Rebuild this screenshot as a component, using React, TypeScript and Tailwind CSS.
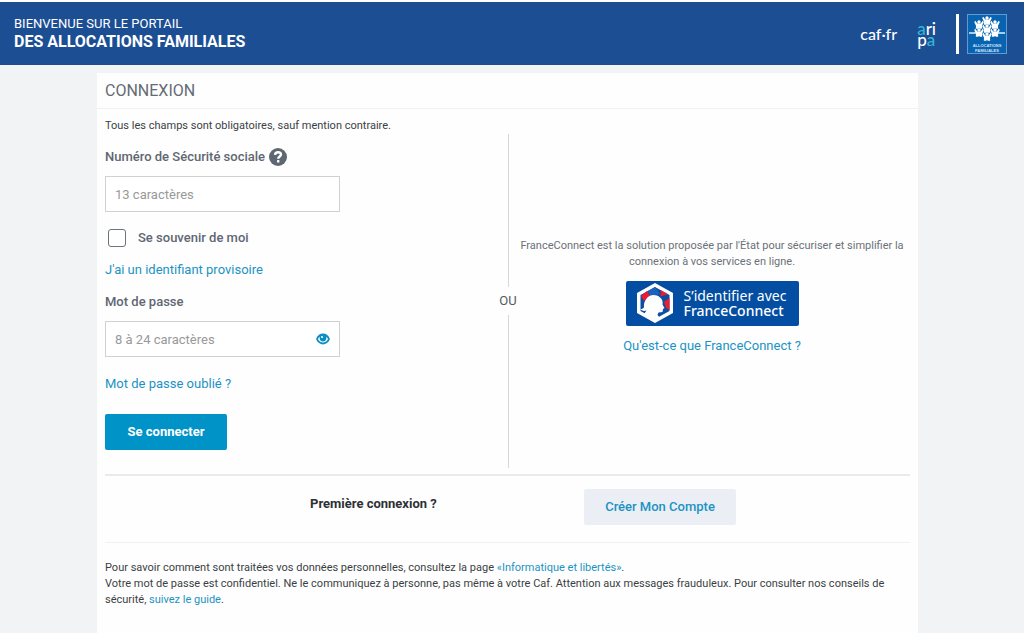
import { useState } from 'react'

const LINK = 'text-[#1b93c3] hover:underline'
const FIELD =
  'block h-9 w-full border border-[#cfd2d4] bg-white pl-[9px] text-[13px] text-[#333] placeholder:text-[#999] focus:outline-none focus:border-[#0093c8]'
const LABEL = 'text-[13px] leading-4 font-medium text-[#5f6772]'

const App = () => {
  const [showPassword, setShowPassword] = useState(false)

  return (
    <div className="min-h-screen bg-[#f1f3f5] font-['Roboto','Liberation_Sans',sans-serif] text-[#3b3f44]">
      <Header />

      <main className="pl-[97px] pr-[106px] pt-2">
        <div className="min-h-[560px] bg-[#fefefe] pb-7">
          <h1 className="flex h-9 items-center border-b border-[#eff1f3] px-2 text-[16px] text-[#646b74]">CONNEXION</h1>

          <div className="px-2">
            <div className="flex pt-[9px]">
              {/* Login form */}
              <form className="w-[393px] shrink-0" onSubmit={(e) => e.preventDefault()}>
                <p className="text-[11px] leading-4">Tous les champs sont obligatoires, sauf mention contraire.</p>

                <div className="mt-[11px] flex h-6 items-center gap-1">
                  <label htmlFor="nir" className={LABEL}>Numéro de Sécurité sociale</label>
                  <button type="button" aria-label="Aide" className="cursor-pointer">
                    <HelpIcon />
                  </button>
                </div>
                <div className="mt-[7px] w-[235px]">
                  <input id="nir" type="text" placeholder="13 caractères" className={FIELD} />
                </div>

                <label className={`mt-[17px] flex items-center gap-3 pl-[3px] ${LABEL}`}>
                  <input
                    type="checkbox"
                    className="size-[18px] appearance-none rounded-[3px] border border-[#6c737b] bg-white checked:bg-[#0093c8]"
                  />
                  Se souvenir de moi
                </label>

                <p className="mt-[15px] text-[13px] leading-4">
                  <a href="#identifiant" className={LINK}>J'ai un identifiant provisoire</a>
                </p>

                <label htmlFor="password" className={`mt-4 block ${LABEL}`}>Mot de passe</label>
                <div className="relative mt-[11px] w-[235px]">
                  <input
                    id="password"
                    type={showPassword ? 'text' : 'password'}
                    placeholder="8 à 24 caractères"
                    className={FIELD}
                  />
                  <button
                    type="button"
                    aria-label="Afficher le mot de passe"
                    onClick={() => setShowPassword(!showPassword)}
                    className="absolute inset-y-0 right-[10px] flex cursor-pointer items-center"
                  >
                    <EyeIcon />
                  </button>
                </div>

                <p className="mt-[19px] text-[13px] leading-4">
                  <a href="#oubli" className={LINK}>Mot de passe oublié ?</a>
                </p>

                <button
                  type="submit"
                  className="mt-[22px] h-9 w-[122px] cursor-pointer rounded-[2px] bg-[#0093c8] text-[13px] font-bold text-white"
                >
                  Se connecter
                </button>
              </form>

              {/* Separator */}
              <div className="mt-4 flex h-[334px] w-5 shrink-0 flex-col items-center">
                <div className="w-px flex-1 bg-[#d5d7d9]" />
                <span className="py-1.5 text-[13px] leading-4 text-[#555b62]">OU</span>
                <div className="w-px flex-1 bg-[#d5d7d9]" />
              </div>

              {/* FranceConnect */}
              <section className="flex flex-1 flex-col items-center justify-center pt-[5px] pr-1 text-center">
                <p className="text-[11px] leading-4 text-[#6b7178]">
                  FranceConnect est la solution proposée par l'État pour sécuriser et simplifier la connexion à vos services en ligne.
                </p>
                <button
                  type="button"
                  className="mt-[11px] flex h-[45px] w-[173px] cursor-pointer items-center gap-2.5 rounded-[2px] bg-[#034ea2] pl-2.5 text-left text-white"
                >
                  <MarianneIcon />
                  <span className="font-['Noto_Sans','Open_Sans',sans-serif] text-[14px] leading-[15px] whitespace-nowrap">
                    S’identifier avec
                    <br />
                    <span className="font-medium">FranceConnect</span>
                  </span>
                </button>
                <a href="#franceconnect" className={`mt-3 text-[13px] leading-4 ${LINK}`}>Qu'est-ce que FranceConnect ?</a>
              </section>
            </div>

            {/* First connection */}
            <div className="mt-1.5 flex items-start border-t-2 border-b border-t-[#e9eaeb] border-b-[#f1f2f3] pt-[13px] pb-[17px]">
              <p className="w-[479px] pt-[7px] pl-[205px] text-[13px] leading-4 font-bold text-[#2d3135]">Première connexion ?</p>
              <button type="button" className="h-9 w-[152px] cursor-pointer rounded-[2px] bg-[#ebeef5] text-[13px] font-medium text-[#1b93c3]">
                Créer Mon Compte
              </button>
            </div>

            <footer className="mt-[17px] text-[11px] leading-4">
              <p>
                Pour savoir comment sont traitées vos données personnelles, consultez la page{' '}
                <a href="#libertes" className={LINK}>«Informatique et libertés»</a>.
              </p>
              <p>
                Votre mot de passe est confidentiel. Ne le communiquez à personne, pas même à votre Caf. Attention aux messages
                frauduleux. Pour consulter nos conseils de sécurité, <a href="#guide" className={LINK}>suivez le guide</a>.
              </p>
            </footer>
          </div>
        </div>
      </main>
    </div>
  )
}

const Header = () => (
  <header className="flex h-[65px] items-center justify-between border-t-2 border-white bg-[#1c4e94] pr-[17px] pl-3.5 text-white">
    <p className="text-[13px] leading-[18px]">
      BIENVENUE SUR LE PORTAIL
      <br />
      <strong className="text-[16px] font-bold">DES ALLOCATIONS FAMILIALES</strong>
    </p>
    <div className="flex items-center">
      <span className="mr-5 font-['Lato',sans-serif] text-[16px] leading-5 font-medium">caf·fr</span>
      <span className="mr-5 font-['Lato',sans-serif] text-[17px] leading-[11px] font-medium">
        <span className="text-[#35b3d6]">a</span>ri
        <br />
        p<span className="text-[#35b3d6]">a</span>
      </span>
      <span className="mr-2 h-10 w-[3px] bg-white" />
      <CafLogo />
    </div>
  </header>
)

const PEOPLE = [
  [20, 4], [12, 8], [28, 8], [20, 12], [12, 16], [28, 16], [20, 20],
]

// Ring of small figures holding hands above the name
const CafLogo = () => (
  <svg width="40" height="40" viewBox="0 0 40 40" role="img" aria-label="Allocations familiales">
    <rect x="0.5" y="0.5" width="39" height="39" fill="#0864b1" stroke="#5f9bd0" />
    <path d="M2 19H9M31 19H38" stroke="#a9cdec" strokeWidth="2" />
    {PEOPLE.map(([x, y]) => (
      <g key={`${x}-${y}`} transform={`translate(${x} ${y})`} fill="#fff">
        <circle r="1.7" />
        <path d="M-4.8 0L-3.6 -1.2L-1.8 1.6H1.8L3.6 -1.2L4.8 0L3 3.8L3.2 6.8H0.9L0 5.9L-0.9 6.8H-3.2L-3 3.8Z" />
      </g>
    ))}
    <g fill="#cfe3f4" fontFamily="Liberation Sans, sans-serif" fontSize="4" fontWeight="bold" textAnchor="middle">
      <text x="20" y="33">ALLOCATIONS</text>
      <text x="20" y="38">FAMILIALES</text>
    </g>
  </svg>
)

const HelpIcon = () => (
  <svg width="18" height="18" viewBox="0 0 18 18" className="block">
    <circle cx="9" cy="9" r="9" fill="#5f6772" />
    <path d="M6 6.8C6.2 4.9 7.4 4.2 9 4.2C10.8 4.2 12 5.2 12 6.6C12 8.5 9.2 8.4 9.2 10.7" fill="none" stroke="#fff" strokeWidth="2.4" />
    <rect x="8" y="12" width="2.4" height="2.4" rx="0.5" fill="#fff" />
  </svg>
)

const EyeIcon = () => (
  <svg width="14" height="12" viewBox="0 0 14 12">
    <path d="M0 6C1.6 2.2 4 0.6 7 0.6S12.4 2.2 14 6C12.4 9.8 10 11.4 7 11.4S1.6 9.8 0 6Z" fill="#0e8fc2" />
    <path d="M2 6C2.5 4.8 3 4.2 3.7 3.7C3.2 6.8 4.7 8.4 7 8.4S10.8 6.8 10.3 3.7C11 4.2 11.5 4.8 12 6C11 8.3 9.3 9.4 7 9.4S3 8.3 2 6Z" fill="#fff" />
    <circle cx="6" cy="4" r="1" fill="#fff" />
  </svg>
)

const MarianneIcon = () => (
  <svg width="38" height="40" viewBox="0 0 38 40" className="shrink-0">
    <path d="M19 0L37 10V30L19 40L1 30V10Z" fill="#fff" />
    <path d="M19 4L33.5 12V28L19 36L4.5 28V12Z" fill="#0b4fa3" />
    <path d="M11 8L14 13L8 18L5 13Z" fill="#ed1c30" />
    <path d="M19 4L24 11L14 13L12 8Z" fill="#1b63bd" />
    <path d="M25 7.3L32 11.3L24.5 13.5Z" fill="#ed1c30" />
    <path d="M33.5 15V27L30 25L28 19Z" fill="#ed1c30" />
    <path
      d="M11 15C14 11.5 20 11 24 14.5C26.5 16.5 27 19 26.5 21.5L28.5 25L27 26L26.5 29L22.5 29.5L21.5 32L24 35L19 38L8 31L10.5 27.5C8.5 28.5 6 28 4 26C6.5 26 7.5 25.5 8 24C7.5 21 8.5 18 11 15Z"
      fill="#fff"
    />
  </svg>
)

export default App
